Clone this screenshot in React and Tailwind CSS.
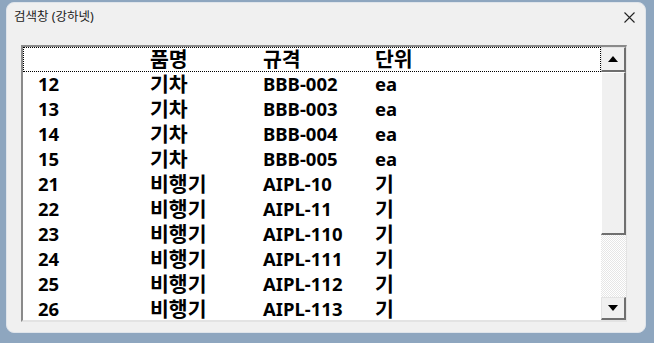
import React from "react";

const rows = [
  ["12", "기차", "BBB-002", "ea"],
  ["13", "기차", "BBB-003", "ea"],
  ["14", "기차", "BBB-004", "ea"],
  ["15", "기차", "BBB-005", "ea"],
  ["21", "비행기", "AIPL-10", "기"],
  ["22", "비행기", "AIPL-11", "기"],
  ["23", "비행기", "AIPL-110", "기"],
  ["24", "비행기", "AIPL-111", "기"],
  ["25", "비행기", "AIPL-112", "기"],
  ["26", "비행기", "AIPL-113", "기"],
];

const font = { fontFamily: '"Noto Sans", "Noto Sans CJK KR", sans-serif' };

function Arrow({ down }) {
  return (
    <svg width="10" height="6" viewBox="0 0 10 6">
      {down ? <path d="M0 0h10L5 6z" fill="#000" /> : <path d="M5 0l5 6H0z" fill="#000" />}
    </svg>
  );
}

// hangul cells are drawn a little larger than latin ones, like Malgun Gothic
const isHangul = (s) => /[\uac00-\ud7a3]/.test(s);

function Cell({ text }) {
  return <span className={isHangul(text) ? "text-[20.5px]" : ""}>{text}</span>;
}

export default function App() {
  return (
    <div className="w-[654px] h-[343px] bg-[#8ea6bf] pl-[6px] pt-[2px] overflow-hidden" style={font}>
      <div className="w-[640px] h-[331px] rounded-[8px] bg-[#f0f0f0] border border-[#dfe4ea] flex flex-col">
        {/* title bar */}
        <div className="h-[28px] flex items-center justify-between pl-[7px] pr-[10px] shrink-0">
          <span className="text-[12.5px] text-[#222]">검색창 (강하넷)</span>
          <svg width="11" height="11" viewBox="0 0 11 11">
            <path d="M0.5 0.5l10 10M10.5 0.5l-10 10" stroke="#222" strokeWidth="1.1" />
          </svg>
        </div>

        {/* list box */}
        <div className="ml-[14px] mt-[14px] w-[606px] h-[277px] flex border-t-2 border-l-2 border-t-[#8a8a8a] border-l-[#8a8a8a] border-r border-b-2 border-r-[#e3e3e3] border-b-[#e3e3e3] bg-white">
          <div className="flex-1 overflow-hidden text-[18.5px] font-bold text-black leading-none">
            <div className="h-[25px] border border-dotted border-black grid grid-cols-[112px_113px_112px_1fr] pl-[14px] items-center">
              <span></span>
              <Cell text="품명" />
              <Cell text="규격" />
              <Cell text="단위" />
            </div>
            {rows.map((r) => (
              <div key={r[0]} className="h-[25px] grid grid-cols-[112px_113px_112px_1fr] pl-[15px] items-center">
                {r.map((c, i) => (
                  <Cell key={i} text={c} />
                ))}
              </div>
            ))}
          </div>

          {/* scrollbar */}
          <div className="w-[25px] flex flex-col">
            <div className="h-[25px] flex items-center justify-center bg-[#f0f0f0] border-t border-l border-t-[#e3e3e3] border-l-[#e3e3e3] border-r-2 border-b-2 border-r-[#6f6f6f] border-b-[#6f6f6f]">
              <Arrow />
            </div>
            <div className="h-[163px] bg-[#f0f0f0] border-t border-l border-t-white border-l-white border-r-2 border-b-2 border-r-[#6f6f6f] border-b-[#6f6f6f]"></div>
            <div className="flex-1 bg-[repeating-conic-gradient(#ffffff_0_25%,#e6e6e6_0_50%)] bg-[length:2px_2px]"></div>
            <div className="h-[23px] flex items-center justify-center bg-[#f0f0f0] border-t border-l border-t-[#e3e3e3] border-l-[#e3e3e3] border-r-2 border-b-2 border-r-[#6f6f6f] border-b-[#6f6f6f]">
              <Arrow down />
            </div>
          </div>
        </div>
      </div>
    </div>
  );
}
